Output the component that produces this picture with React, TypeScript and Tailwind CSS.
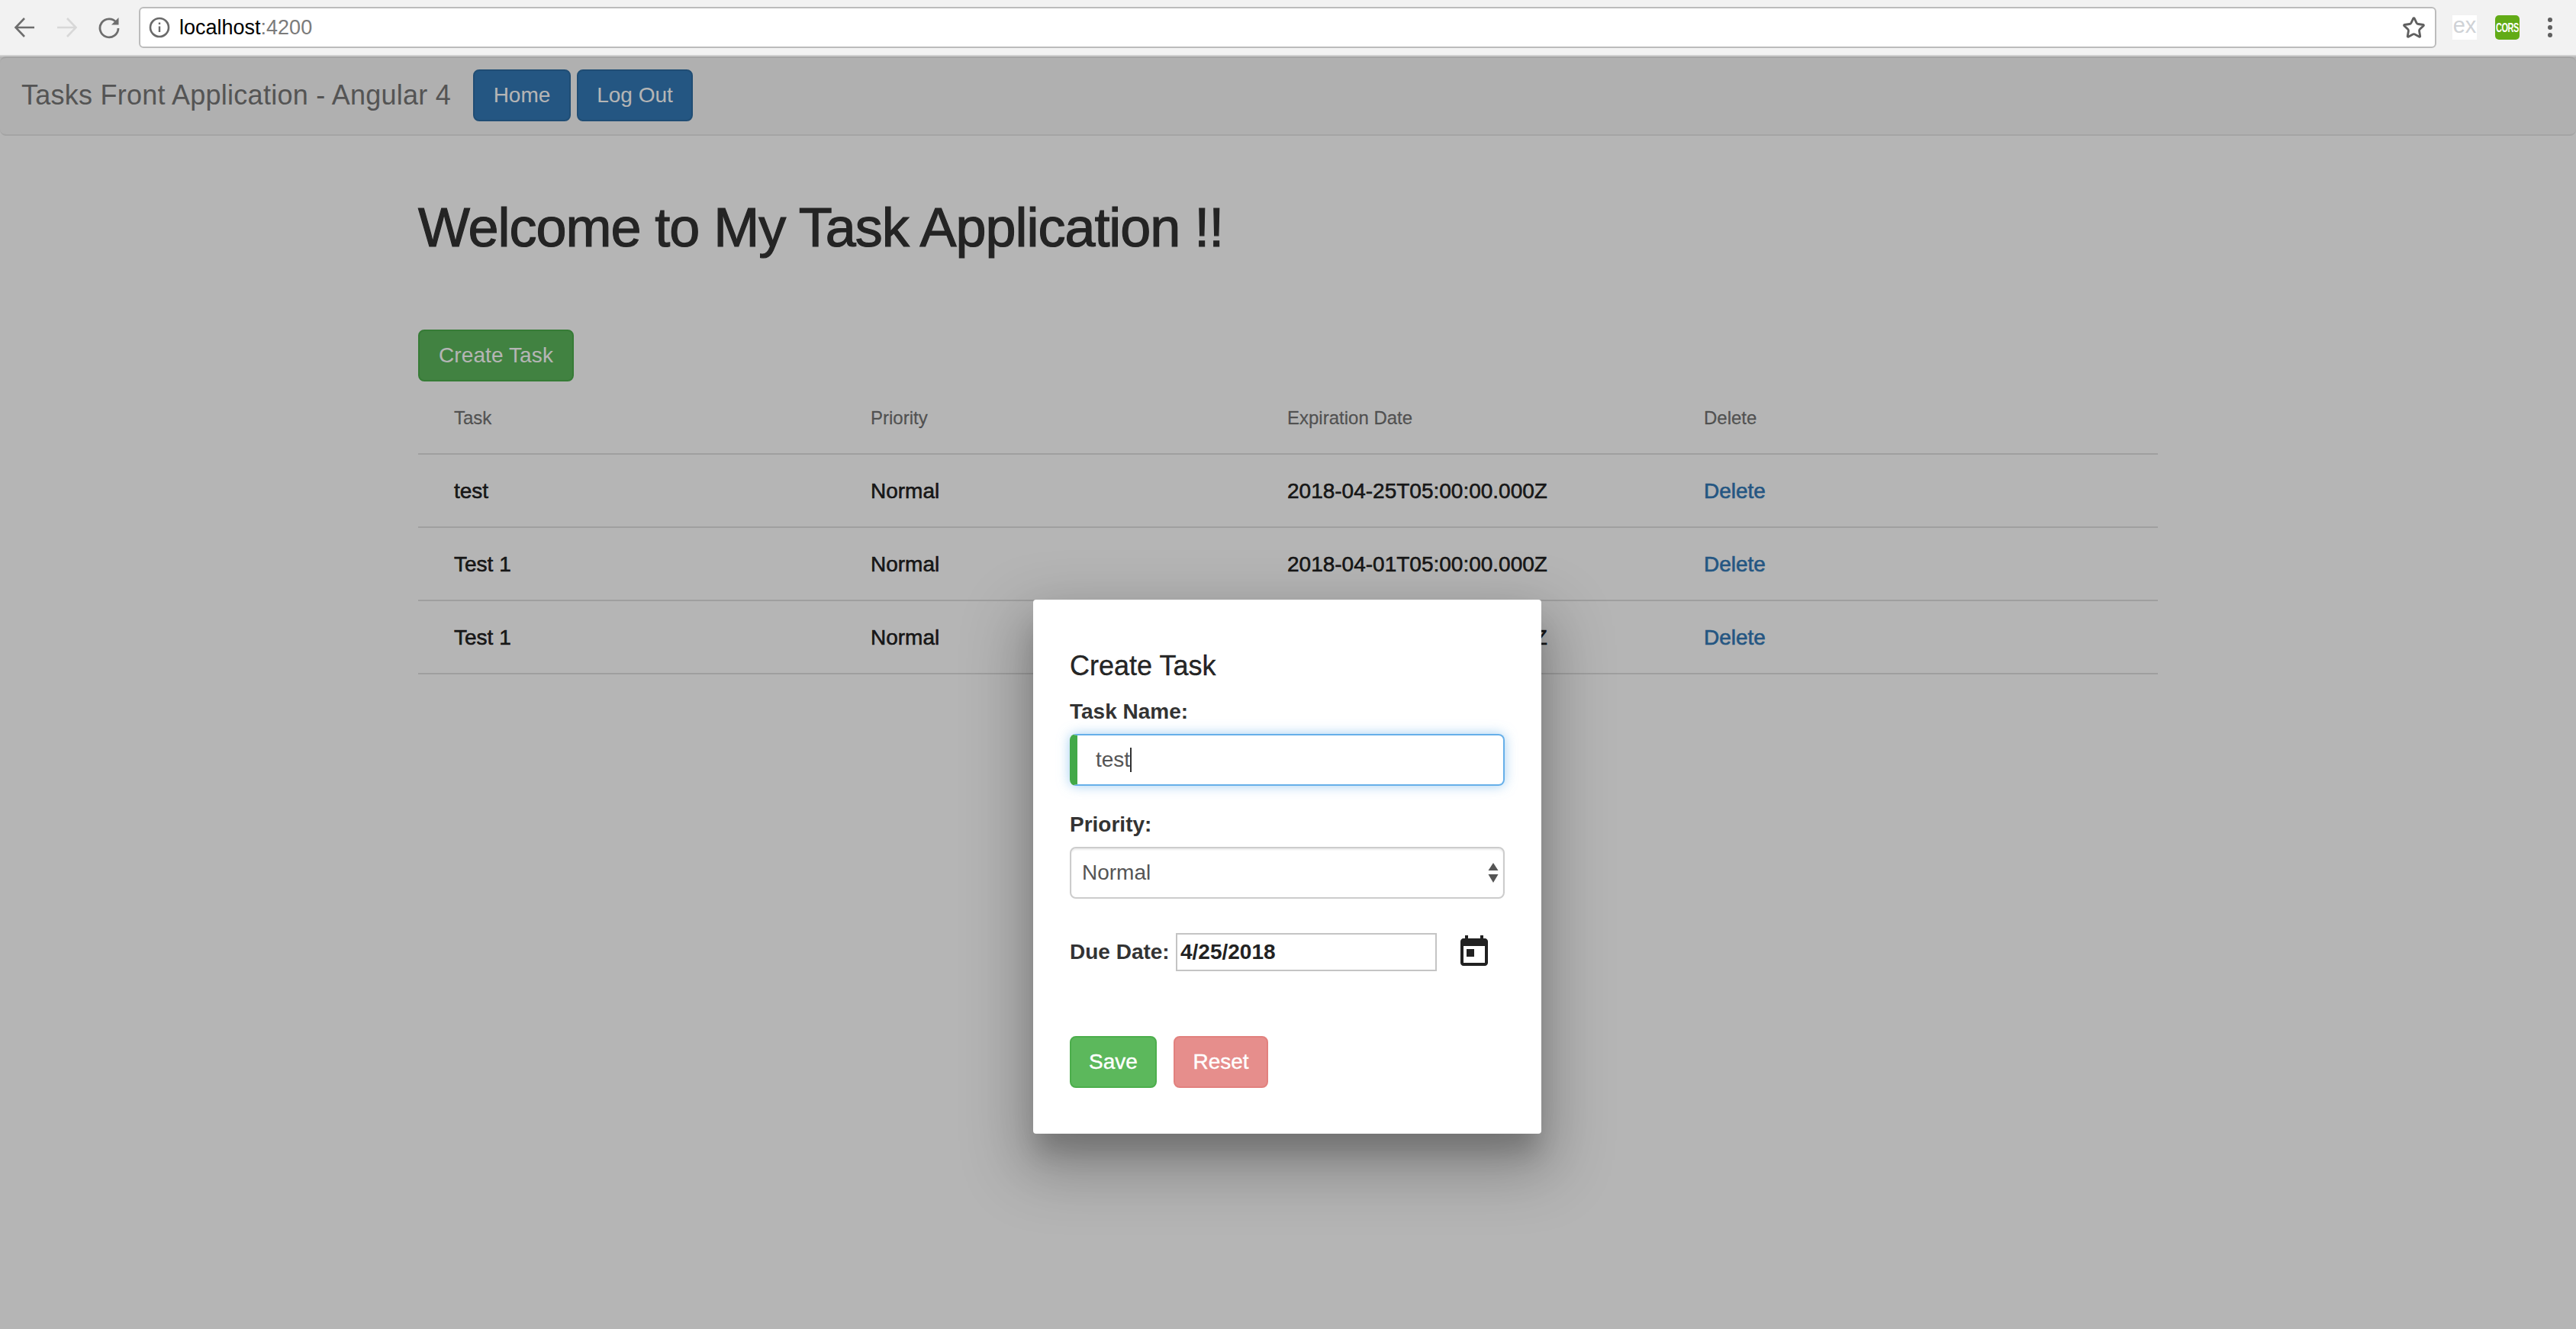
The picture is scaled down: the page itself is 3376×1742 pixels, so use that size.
import React from "react";
import { Star } from "lucide-react";

const tasks = [
  { name: "test", priority: "Normal", date: "2018-04-25T05:00:00.000Z" },
  { name: "Test 1", priority: "Normal", date: "2018-04-01T05:00:00.000Z" },
  { name: "Test 1", priority: "Normal", date: "2018-04-01T05:00:00.000Z" },
];

const BrowserBar: React.FC = () => (
  <div className="h-[74px] shrink-0 bg-[#f2f2f2] border-b-2 border-[#d0d0d0] flex items-center pl-[18px] pr-[31px]">
    <svg width="28" height="28" viewBox="0 0 28 28" fill="none" stroke="#6e6e6e" strokeWidth="2.6" className="shrink-0">
      <path d="M27 14H3M14 2 2.500 14 14 26" />
    </svg>
    <svg width="28" height="28" viewBox="0 0 28 28" fill="none" stroke="#d8d8d8" strokeWidth="2.6" className="ml-[28px] shrink-0">
      <path d="M1 14h24M14 2l11.500 12L14 26" />
    </svg>
    <svg width="30" height="30" viewBox="0 0 30 30" fill="none" stroke="#6e6e6e" strokeWidth="2.8" className="ml-[26px] shrink-0">
      <path d="M24.500 8.500A12 12 0 1 0 27 16" />
      <path d="M27.500 2v9.500H18" fill="#6e6e6e" stroke="none" />
    </svg>
    <div className="ml-[24px] flex-1 h-[54px] bg-white border-2 border-[#bcbcbc] rounded-[6px] flex items-center pl-[11px] pr-[12px]">
      <svg width="28" height="28" viewBox="0 0 28 28" fill="none" className="shrink-0">
        <circle cx="14" cy="14" r="12" stroke="#6a6a6a" strokeWidth="2.6" />
        <path d="M14 12.500v7.500M14 7.500v2.500" stroke="#6a6a6a" strokeWidth="2.4" />
      </svg>
      <span className="ml-[12px] text-[27px] text-black">
        localhost<span className="text-[#7b7b7b]">:4200</span>
      </span>
      <Star className="ml-auto" size={31} color="#5f5f5f" strokeWidth={2.2} />
    </div>
    <div className="ml-[21px] w-[32px] h-[32px] bg-white flex items-center justify-center text-[29px] leading-none text-[#cfd2d6] pb-[5px]">
      ex
    </div>
    <div className="ml-[24px] w-[32px] h-[32px] rounded-[5px] bg-[#62ab16] flex items-center justify-center text-[11px] font-bold text-white tracking-[-0.5px]">
      <span className="scale-y-[1.5]">CORS</span>
    </div>
    <div className="ml-[37px] flex flex-col gap-[4px]">
      <span className="w-[6px] h-[6px] rounded-full bg-[#5f5f5f]" />
      <span className="w-[6px] h-[6px] rounded-full bg-[#5f5f5f]" />
      <span className="w-[6px] h-[6px] rounded-full bg-[#5f5f5f]" />
    </div>
  </div>
);

const Navbar: React.FC = () => (
  <nav className="h-[104px] shrink-0 bg-[#f8f8f8] border-y-2 border-[#e7e7e7] rounded-[8px] flex items-center pl-[28px] pb-[2px]">
    <span className="text-[36px] text-[#777777] w-[592px] tracking-[0.25px]">Tasks Front Application - Angular 4</span>
    <div className="flex gap-[8px]">
      <button className="h-[68px] w-[128px] text-[28px] text-white bg-[#337ab7] border-2 border-[#2e6da4] rounded-[8px]">Home</button>
      <button className="h-[68px] w-[152px] text-[28px] text-white bg-[#337ab7] border-2 border-[#2e6da4] rounded-[8px]">Log Out</button>
    </div>
  </nav>
);

const TaskTable: React.FC = () => (
  <div className="w-[2280px]">
    <div className="h-[96px] pl-[47px] pr-[49px] pt-[1px] grid grid-cols-4 items-center border-b-2 border-black/12 text-[24px] text-black/54 [-webkit-text-stroke:0.3px]">
      <div>Task</div>
      <div>Priority</div>
      <div>Expiration Date</div>
      <div>Delete</div>
    </div>
    {tasks.map((t, i) => (
      <div key={i} className="h-[96px] pl-[47px] pr-[49px] pt-[2px] grid grid-cols-4 items-center border-b-2 border-black/12 text-[28px] text-black/87 [-webkit-text-stroke:0.6px]">
        <div>{t.name}</div>
        <div>{t.priority}</div>
        <div>{t.date}</div>
        <div>
          <a className="text-[#337ab7]">Delete</a>
        </div>
      </div>
    ))}
  </div>
);

const CreateTaskDialog: React.FC = () => (
  <div className="absolute inset-0 bg-black/29 flex justify-center items-start pt-[712px] pr-[2px]">
    <div className="w-[666px] h-[700px] bg-white rounded-[4px] px-[48px] pt-[48px] text-[28px] text-[#333333] shadow-[0_30px_30px_-6px_rgba(0,0,0,0.16),0_34px_80px_16px_rgba(0,0,0,0.26)]">
      <h2 className="h-[78px] text-[36px] leading-[78px] text-black/87 [-webkit-text-stroke:0.4px]">Create Task</h2>
      <label className="block h-[40px] leading-[42px] mb-[10px] font-bold">Task Name:</label>
      <div className="h-[68px] mb-[30px] rounded-[8px] border-2 border-[#66afe9] border-l-[10px] border-l-[#42a948] shadow-[0_0_16px_rgba(102,175,233,0.6)] flex items-center pl-[24px] text-[#555555]">
        test
        <span className="w-[2px] h-[32px] bg-[#333333]" />
      </div>
      <label className="block h-[40px] leading-[42px] mb-[10px] font-bold">Priority:</label>
      <div className="relative h-[68px] mb-[45px]">
        <select className="w-full h-full appearance-none rounded-[8px] border-2 border-[#cccccc] pl-[14px] text-[#555555] bg-white shadow-[inset_0_2px_2px_rgba(0,0,0,0.075)]" defaultValue="Normal">
          <option>Normal</option>
        </select>
        <svg width="14" height="28" viewBox="0 0 14 28" className="absolute right-[8px] top-[20px]">
          <path d="M7 1l6.500 10H.5z" fill="#555555" />
          <path d="M.5 16h13L7 27z" fill="#555555" />
        </svg>
      </div>
      <div className="h-[50px] flex items-center">
        <label className="font-bold w-[139px] shrink-0">Due Date:</label>
        <input
          className="w-[342px] h-[50px] border-2 border-[#c4c4c4] pl-[4px] font-bold text-[#222222]"
          defaultValue="4/25/2018"
        />
        <svg width="48" height="48" viewBox="0 0 24 24" fill="#212121" className="ml-[25px] shrink-0">
          <path d="M19 3h-1V1h-2v2H8V1H6v2H5c-1.110 0-1.990.9-1.990 2L3 19c0 1.100.890 2 2 2h14c1.100 0 2-.9 2-2V5c0-1.100-.9-2-2-2zm0 16H5V8h14v11zM7 10h5v5H7z" />
        </svg>
      </div>
      <div className="mt-[85px] flex gap-[22px]">
        <button className="w-[114px] h-[68px] rounded-[8px] bg-[#5cb85c] border-2 border-[#4cae4c] text-white [-webkit-text-stroke:0.4px]">Save</button>
        <button className="w-[124px] h-[68px] rounded-[8px] bg-[#d9534f] border-2 border-[#d43f3a] text-white opacity-65 [-webkit-text-stroke:0.4px]">Reset</button>
      </div>
    </div>
  </div>
);

const App: React.FC = () => {
  return (
    <div className="h-screen overflow-hidden flex flex-col bg-white font-['Liberation_Sans',Arial,sans-serif]">
      <BrowserBar />
      <div className="relative flex-1 flex flex-col">
        <Navbar />
        <main className="pl-[548px]">
          <h1 className="mt-[80px] mb-[94px] h-[80px] leading-[80px] text-[72px] text-[#333333] tracking-[-1.05px] [-webkit-text-stroke:1.2px]">
            Welcome to My Task Application !!
          </h1>
          <button className="h-[68px] w-[204px] rounded-[8px] bg-[#5cb85c] border-2 border-[#4cae4c] text-[28px] text-white tracking-[0.1px]">
            Create Task
          </button>
          <TaskTable />
        </main>
        <CreateTaskDialog />
      </div>
    </div>
  );
};

export default App;
